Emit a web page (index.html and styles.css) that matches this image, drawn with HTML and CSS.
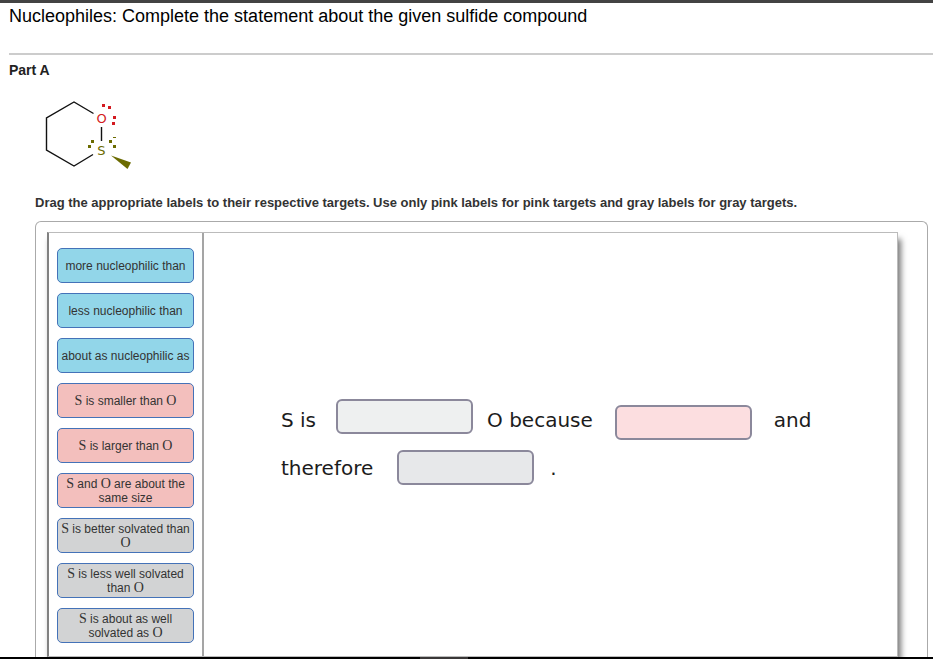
FILE: index.html
```html
<!DOCTYPE html>
<html lang="en">
<head>
<meta charset="utf-8">
<title>Nucleophiles</title>
<link rel="stylesheet" href="styles.css">
</head>
<body>
<header class="page-header">
  <h1>Nucleophiles: Complete the statement about the given sulfide compound</h1>
</header>
<main class="part">
  <h2>Part A</h2>
  <div class="part-body">
    <svg class="molecule" width="120" height="90" viewBox="0 0 120 90" role="img" aria-label="Six-membered ring containing O bonded to S with a methyl wedge">
      <path d="M63.500 23.500 44 12 16.500 28V60L44 76 63 64.500M71.500 37V51" fill="none" stroke="#111" stroke-width="1.400"/>
      <text class="atom oxygen" x="71.500" y="33" text-anchor="middle">O</text>
      <text class="atom sulfur" x="71.500" y="65" text-anchor="middle">S</text>
      <path d="M81 65.500 101 72.500 97.500 79Z" fill="#6b6b00"/>
      <g fill="#d31a20">
        <rect x="72" y="14" width="3" height="3"/><rect x="78" y="16" width="3" height="3"/>
        <rect x="83" y="26" width="3" height="3"/><rect x="82" y="32" width="3" height="3"/>
      </g>
      <g fill="#6b6b00">
        <rect x="61" y="50" width="3" height="3"/><rect x="58" y="55" width="3" height="3"/>
        <rect x="79" y="50" width="3" height="3"/><rect x="83" y="55" width="3" height="3"/>
        <rect x="83" y="47" width="3" height="1"/>
      </g>
    </svg>
    <p class="instructions">Drag the appropriate labels to their respective targets. Use only pink labels for pink targets and gray labels for gray targets.</p>
    <section class="frame">
      <div class="board">
        <div class="palette">
          <button class="label blue">more nucleophilic than</button>
          <button class="label blue">less nucleophilic than</button>
          <button class="label blue">about as nucleophilic as</button>
          <button class="label pink"><span><i>S</i> is smaller than <i>O</i></span></button>
          <button class="label pink"><span><i>S</i> is larger than <i>O</i></span></button>
          <button class="label pink"><span><i>S</i> and <i>O</i> are about the same size</span></button>
          <button class="label gray"><span><i>S</i> is better solvated than <i>O</i></span></button>
          <button class="label gray"><span><i>S</i> is less well solvated than <i>O</i></span></button>
          <button class="label gray"><span><i>S</i> is about as well solvated as <i>O</i></span></button>
        </div>
        <div class="statement">
          <div class="line">
            <span>S is</span>
            <button class="target compare" aria-label="Comparison target"></button>
            <span>O because</span>
            <button class="target reason" aria-label="Reason target"></button>
            <span>and</span>
          </div>
          <div class="line">
            <span>therefore</span>
            <button class="target result" aria-label="Result target"></button>
            <span>.</span>
          </div>
        </div>
      </div>
    </section>
  </div>
</main>
<footer class="taskbar"><div class="taskbar-tab"></div></footer>
</body>
</html>
```
FILE: styles.css
```css
* {
  box-sizing: border-box;
}

body {
  margin: 0;
  background: #fff;
  color: #222;
  font-family: "Liberation Sans", Arial, sans-serif;
  border-top: 3px solid #434343;
}

.page-header {
  margin-left: 9px;
  padding: 2px 0 26px;
  border-bottom: 2px solid #ccc;
}

h1 {
  margin: 0;
  color: #000;
  font-size: 18px;
  font-weight: 400;
  line-height: 22px;
}

h2 {
  margin: 0;
  padding: 7px 9px;
  font-size: 14px;
  line-height: 16px;
}

.part-body {
  margin: 5px 5px 0 35px;
}

.molecule {
  display: block;
  margin-left: -5px;
}

.atom {
  font-family: "DejaVu Sans", sans-serif;
  font-size: 13px;
  font-weight: 400;
}

.oxygen {
  fill: #d31a20;
}

.sulfur {
  fill: #6b6b00;
}

.instructions {
  margin: 0;
  padding: 15px 0 10px;
  color: #333;
  font-size: 13px;
  font-weight: 700;
  line-height: 16px;
}

.frame {
  padding: 10px 29px 0 11px;
  border: 1px solid #aaa;
  border-bottom: 0;
  border-radius: 6px 6px 0 0;
  overflow: hidden;
}

.board {
  display: flex;
  background: #fff;
  border: 1px solid #bbb;
  border-left: 2px solid #808080;
  box-shadow: 3px 7px 6px #777;
}

.palette {
  display: flex;
  flex: none;
  flex-direction: column;
  gap: 10px;
  width: 155px;
  padding: 15px 8px 13px;
  border-right: 2px solid #a5a5a5;
}

.label {
  height: 35px;
  padding: 0 2px;
  border: 1px solid #4472b8;
  border-radius: 5px;
  color: #333;
  font: 12px/14px "Liberation Sans", Arial, sans-serif;
  cursor: grab;
}

.label i {
  font-family: "Liberation Serif", "Times New Roman", serif;
  font-size: 14px;
  font-style: normal;
  line-height: 12px;
}

.blue {
  background: #92d6e9;
}

.pink {
  background: #f3bfbd;
}

.gray {
  background: #d2d3d4;
}

.statement {
  display: flex;
  flex: 1;
  flex-direction: column;
  gap: 10px;
  padding: 166px 20px 0 77px;
  color: #1c1c1c;
  font: 20px/24px "DejaVu Sans", Verdana, sans-serif;
}

.line {
  display: flex;
  align-items: center;
  white-space: nowrap;
}

.target {
  flex: none;
  width: 137px;
  height: 35px;
  padding: 0;
  border: 2px solid #8b889b;
  border-radius: 6px;
}

.compare {
  align-self: flex-start;
  margin: 0 14px 6px 20px;
  background: #eef0f0;
}

.reason {
  align-self: flex-end;
  margin: 0 22px;
  background: #fcdee0;
}

.result {
  margin: 0 16px 0 24px;
  background: #e7e8ea;
}

.taskbar {
  height: 2px;
  background: #000;
}

.taskbar-tab {
  width: 48px;
  height: 2px;
  margin-left: 45%;
  background: #393737;
}
```
